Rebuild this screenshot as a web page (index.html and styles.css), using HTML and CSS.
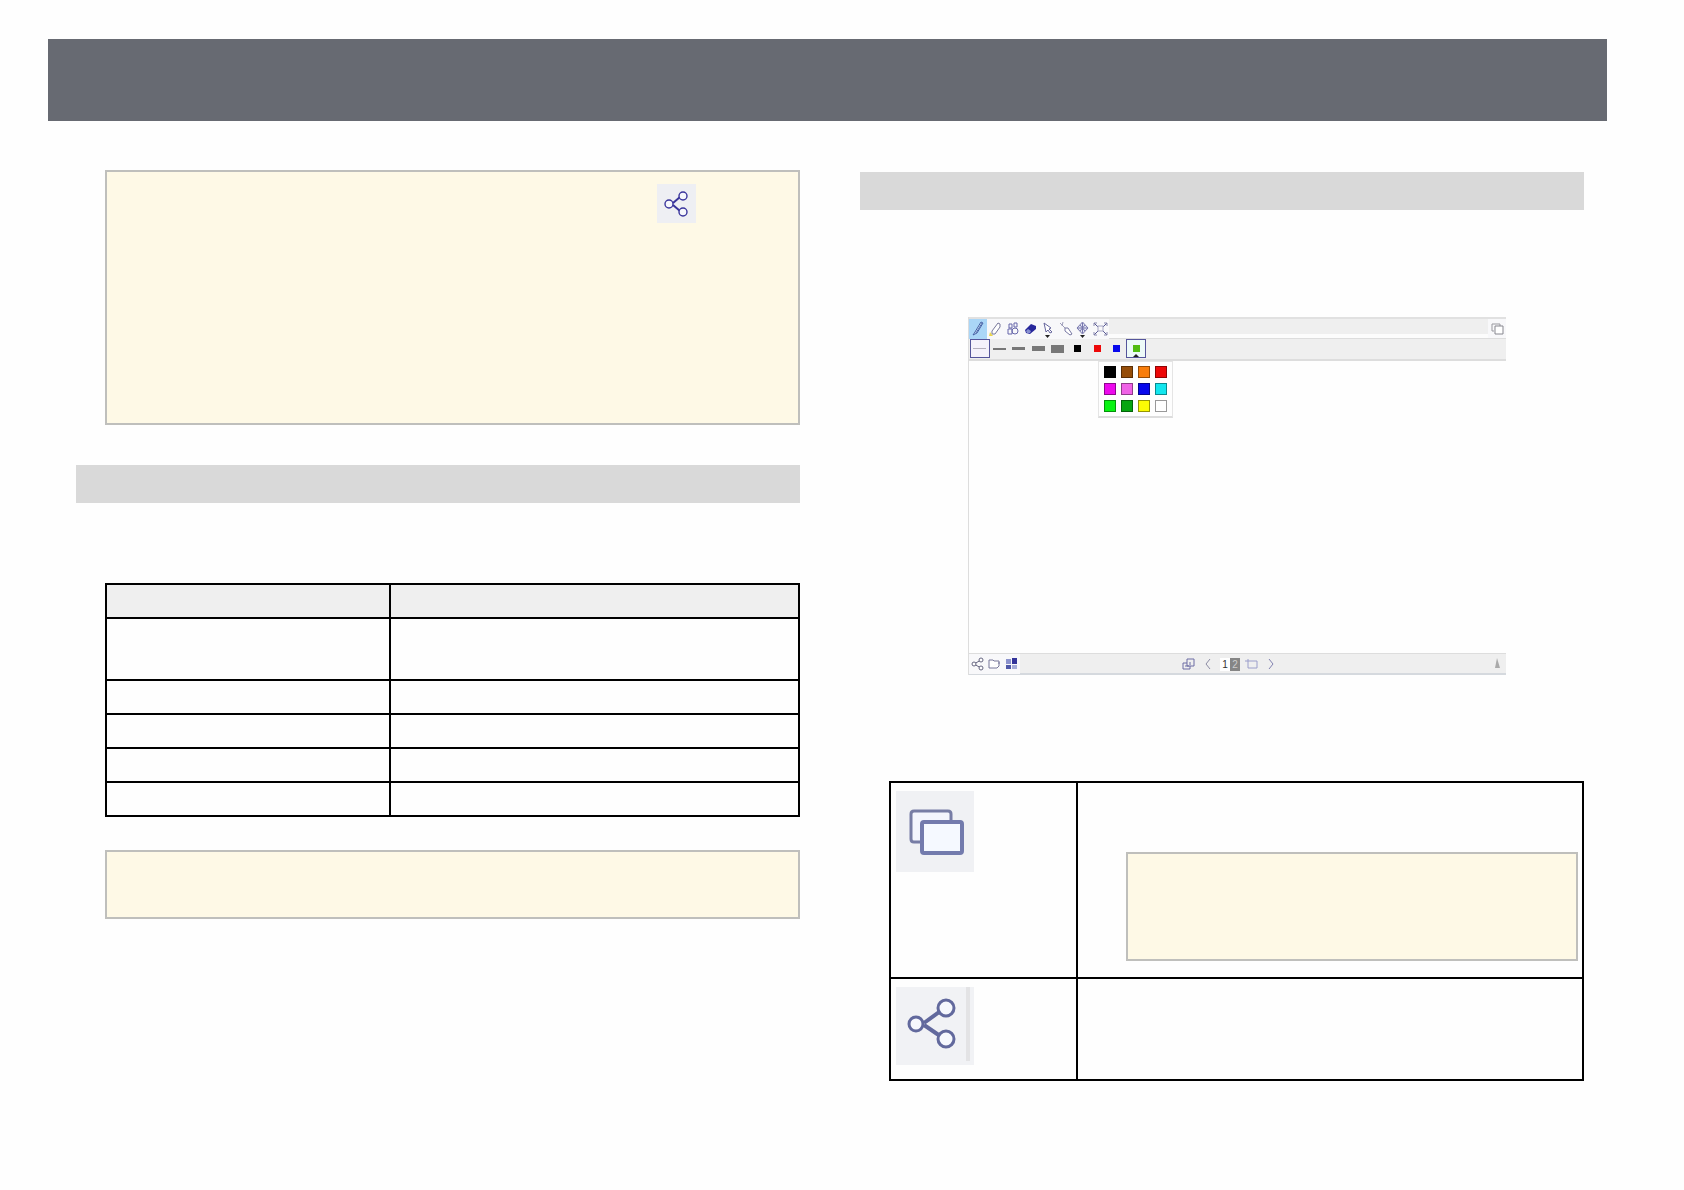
FILE: index.html
```html
<!DOCTYPE html>
<html lang="en">
<head>
    <meta charset="UTF-8">
    <meta name="viewport" content="width=device-width, initial-scale=1.0">
    <title>Whiteboard guide</title>
    <link rel="stylesheet" href="styles.css">
</head>
<body>
    <svg class="symbols" aria-hidden="true">
        <symbol id="share" viewBox="0 0 78 78">
            <path d="M28 36 L50 20 M28 38 L50 53" fill="none" stroke="currentColor" stroke-width="4"/>
            <g fill="#f6f8fd" stroke="currentColor" stroke-width="3">
                <circle cx="20" cy="37" r="7"/>
                <circle cx="50" cy="21" r="8"/>
                <circle cx="50" cy="52" r="8"/>
            </g>
        </symbol>
    </svg>

    <header class="banner"></header>

    <main class="columns">
        <section class="column">
            <div class="note note-tall">
                <svg class="note-icon" role="img" aria-label="Share" viewBox="0 0 39 39">
                    <rect width="39" height="39" fill="#eeeff3"/>
                    <path d="M16 19 L23 13 M16 21 L23 27" fill="none" stroke="#3a359c" stroke-width="2"/>
                    <g fill="#f6f7fc" stroke="#3a359c" stroke-width="1.4">
                        <circle cx="12" cy="20" r="4"/>
                        <circle cx="26" cy="12" r="4"/>
                        <circle cx="26" cy="28" r="4"/>
                    </g>
                </svg>
            </div>

            <div class="heading heading-spaced"></div>

            <table class="grid-table">
                <thead>
                    <tr><th></th><th></th></tr>
                </thead>
                <tbody>
                    <tr class="row-tall"><td></td><td></td></tr>
                    <tr><td></td><td></td></tr>
                    <tr><td></td><td></td></tr>
                    <tr><td></td><td></td></tr>
                    <tr><td></td><td></td></tr>
                </tbody>
            </table>

            <div class="note note-short"></div>
        </section>

        <section class="column">
            <div class="heading"></div>

            <div class="board">
                <div class="toolbar">
                    <div class="tools">
                        <button class="tool active" aria-label="Pen">
                            <svg viewBox="0 0 17 20"><path d="M12 3 L6 13 L4 16 L8 14 L14 4 Z" fill="#d9efff" stroke="#4661a5"/><path d="M13 4 L7 14" stroke="#526eae"/></svg>
                        </button>
                        <button class="tool" aria-label="Highlighter">
                            <svg viewBox="0 0 17 20"><path d="M11 4 L13 5 L13 8 L8 15 L5 15 L5 12 Z" fill="#fff" stroke="#77779a"/><path d="M3 13 L6 17 L2 17 Z" fill="#e9d64e"/></svg>
                        </button>
                        <button class="tool" aria-label="Shapes">
                            <svg viewBox="0 0 17 20"><path d="M5 5 H8 V9 H5 Z M10 4 H13 V8 H10 Z M4 10 H8 V15 H4 Z" fill="none" stroke="#6767aa"/><circle cx="11" cy="12" r="3" fill="none" stroke="#6767aa"/></svg>
                        </button>
                        <button class="tool" aria-label="Eraser">
                            <svg viewBox="0 0 17 20"><path d="M3 11 L9 5 L14 7 L14 10 L8 15 L4 14 Z" fill="#27279b"/><path d="M4 12 L6 10 L9 12 L8 14 L5 14 Z" fill="#8790d0"/></svg>
                        </button>
                        <button class="tool" aria-label="Select">
                            <svg viewBox="0 0 17 20"><path d="M5 4 L12 9 L10 10 L13 13 L11 14 L9 11 L7 13 Z" fill="#fff" stroke="#65659d"/><path d="M6 16 H11 L8.500 19 Z" fill="#222"/></svg>
                        </button>
                        <button class="tool" aria-label="Laser pointer">
                            <svg viewBox="0 0 17 20"><path d="M3 4 L9 10 M6 3 L5 7" stroke="#9b9bb8"/><path d="M8 9 L11 9 L15 15 L13 16 L8 12 Z" fill="#fff" stroke="#7777a3"/></svg>
                        </button>
                        <button class="tool" aria-label="Pan">
                            <svg viewBox="0 0 17 20"><path d="M8.500 3 L14 9 L8.500 15 L3 9 Z" fill="#e2e3f3" stroke="#7777ad"/><path d="M8.500 4 V14 M4 9 H13 M6 6 L11 12 M11 6 L6 12" stroke="#7777ad"/><path d="M6 16 H11 L8.500 19 Z" fill="#222"/></svg>
                        </button>
                        <button class="tool" aria-label="Zoom to fit">
                            <svg viewBox="0 0 17 20"><path d="M2 4 L6 8 M15 4 L11 8 M2 16 L6 12 M15 16 L11 12" stroke="#555592"/><path d="M2 7 V4 H5 M12 4 H15 V7 M2 13 V16 H5 M12 16 H15 V13" fill="none" stroke="#8888ae"/><rect x="6" y="7" width="5" height="5" fill="none" stroke="#a5a5c3"/></svg>
                        </button>
                    </div>
                    <button class="tool windows" aria-label="Switch window">
                        <svg viewBox="0 0 17 20"><path d="M5 12 H3 V5 H11 V7" fill="none" stroke="#99999f"/><path d="M6 7 H14 V15 H6 Z" fill="#fff" stroke="#87878f"/></svg>
                    </button>
                </div>

                <div class="options">
                    <button class="option selected" aria-label="Line 1"><span class="line line-1"></span></button>
                    <button class="option" aria-label="Line 2"><span class="line line-2"></span></button>
                    <button class="option" aria-label="Line 3"><span class="line line-3"></span></button>
                    <button class="option" aria-label="Line 4"><span class="line line-4"></span></button>
                    <button class="option" aria-label="Line 5"><span class="line line-5"></span></button>
                    <button class="option" aria-label="Black"><span class="dot black"></span></button>
                    <button class="option" aria-label="Red"><span class="dot red"></span></button>
                    <button class="option" aria-label="Blue"><span class="dot blue"></span></button>
                    <button class="option selected custom" aria-label="More colors"><span class="dot leaf"></span></button>

                    <div class="palette">
                        <button class="swatch black" aria-label="Black"></button>
                        <button class="swatch brown" aria-label="Brown"></button>
                        <button class="swatch orange" aria-label="Orange"></button>
                        <button class="swatch red" aria-label="Red"></button>
                        <button class="swatch magenta" aria-label="Magenta"></button>
                        <button class="swatch pink" aria-label="Pink"></button>
                        <button class="swatch blue" aria-label="Blue"></button>
                        <button class="swatch cyan" aria-label="Cyan"></button>
                        <button class="swatch lime" aria-label="Lime"></button>
                        <button class="swatch green" aria-label="Green"></button>
                        <button class="swatch yellow" aria-label="Yellow"></button>
                        <button class="swatch white" aria-label="White"></button>
                    </div>
                </div>

                <div class="canvas"></div>

                <div class="statusbar">
                    <div class="files">
                        <button class="tool" aria-label="Share">
                            <svg viewBox="0 0 17 20"><path d="M5 10 L12 6 M5 10 L12 14" stroke="#666681"/><g fill="#fff" stroke="#666681"><circle cx="5" cy="10" r="2"/><circle cx="12" cy="6" r="2"/><circle cx="12" cy="14" r="2"/></g></svg>
                        </button>
                        <button class="tool" aria-label="Open">
                            <svg viewBox="0 0 17 20"><path d="M3 14 V6 H7 L8 7 H13 V10 M3 14 H11 L13 12 V8" fill="#fff" stroke="#77779a"/></svg>
                        </button>
                        <button class="tool" aria-label="Templates">
                            <svg viewBox="0 0 17 20"><rect x="3" y="5" width="5" height="5" fill="#8c93cd"/><rect x="9" y="4" width="5" height="6" fill="#34349a"/><rect x="3" y="11" width="5" height="4" fill="#5059a8"/><rect x="9" y="11" width="5" height="4" fill="#a5abd8"/></svg>
                        </button>
                    </div>
                    <div class="pages">
                        <button class="tool" aria-label="Duplicate page">
                            <svg viewBox="0 0 17 20"><path d="M7 9 H3 V15 H10 V12" fill="none" stroke="#6d6da4"/><path d="M7 5 H14 V12 H7 Z M5 12 H9 M10 8 V11" fill="none" stroke="#6d6da4"/></svg>
                        </button>
                        <button class="tool" aria-label="Previous page">
                            <svg viewBox="0 0 17 20"><path d="M10 5 L6 10 L10 15" fill="none" stroke="#8c8ca4"/></svg>
                        </button>
                        <div class="page-numbers">
                            <button class="page">1</button>
                            <button class="page current">2</button>
                        </div>
                        <button class="tool" aria-label="Add page">
                            <svg viewBox="0 0 17 20"><path d="M5 5 V11 M2 7 H9 M9 7 H14 V14 H5 V11" fill="none" stroke="#9b9ecb"/></svg>
                        </button>
                        <button class="tool" aria-label="Next page">
                            <svg viewBox="0 0 17 20"><path d="M6 5 L10 10 L6 15" fill="none" stroke="#8080b0"/></svg>
                        </button>
                    </div>
                    <button class="tool status-end" aria-label="Toolbar position">
                        <svg viewBox="0 0 17 20"><path d="M8 4 L11 14 H6 Z" fill="#aaa"/></svg>
                    </button>
                </div>
            </div>

            <table class="grid-table icon-table">
                <tbody>
                    <tr class="windows-row">
                        <td>
                            <svg class="thumb" role="img" aria-label="Switch window" viewBox="0 0 78 81">
                                <rect width="78" height="81" fill="#f0f1f4"/>
                                <path d="M24 51 H18 Q15 51 15 48 V23 Q15 20 18 20 H52 Q55 20 55 23 V30" fill="#f3f5fd" stroke="#777da5" stroke-width="3"/>
                                <rect x="26" y="31" width="40" height="31" rx="2" fill="#f5f9ff" stroke="#737bad" stroke-width="4"/>
                            </svg>
                        </td>
                        <td><div class="note note-inner"></div></td>
                    </tr>
                    <tr class="share-row">
                        <td>
                            <svg class="thumb share-thumb" role="img" aria-label="Share" viewBox="0 0 78 78">
                                <rect width="78" height="78" fill="#f1f2f5"/>
                                <rect x="70" width="4" height="74" fill="#e3e3e5"/>
                                <use href="#share" width="78" height="78"/>
                            </svg>
                        </td>
                        <td></td>
                    </tr>
                </tbody>
            </table>
        </section>
    </main>
</body>
</html>
```
FILE: styles.css
```css
* {
    margin: 0;
    padding: 0;
    box-sizing: border-box;
}

body {
    font-family: "Liberation Sans", Arial, sans-serif;
    background: #fefefe;
    color: #222;
}

button {
    border: 0;
    background: none;
    font-family: inherit;
    cursor: pointer;
}

.symbols {
    display: none;
}

.banner {
    height: 82px;
    margin: 39px 77px 0 48px;
    background: #676a72;
}

.columns {
    display: grid;
    grid-template-columns: 1fr 1fr;
    gap: 60px;
    padding: 49px 100px 40px 76px;
}

.column {
    min-width: 0;
}

.column + .column {
    padding-top: 2px;
}

.heading {
    height: 38px;
    background: #d9d9d9;
}

.heading-spaced {
    margin: 40px 0 80px;
}

/* Notes */
.note {
    margin-left: 29px;
    border: 2px solid #bfbfbc;
    background: #fef9e6;
}

.note-tall {
    display: flex;
    justify-content: flex-end;
    min-height: 255px;
    padding: 12px 102px 0 0;
}

.note-short {
    min-height: 69px;
    margin-top: 33px;
}

.note-inner {
    min-height: 109px;
    margin: 69px 4px 0 48px;
}

.note-icon {
    width: 39px;
    height: 39px;
}

/* Tables */
.grid-table {
    width: calc(100% - 29px);
    margin-left: 29px;
    border-collapse: collapse;
    table-layout: fixed;
}

.grid-table th,
.grid-table td {
    height: 34px;
    border: 2px solid #000;
    vertical-align: top;
}

.grid-table th {
    background: #efefef;
}

.grid-table th:first-child {
    width: 41%;
}

.grid-table .row-tall td {
    height: 62px;
}

.icon-table td:first-child {
    width: 27%;
}

.icon-table .windows-row td {
    height: 196px;
}

.icon-table .share-row td {
    height: 102px;
}

.thumb {
    display: block;
    width: 78px;
    height: 81px;
    margin: 8px 0 0 5px;
}

.share-thumb {
    height: 78px;
    color: #62699d;
}

/* Whiteboard window */
.board {
    margin: 107px 78px 106px 108px;
    border-left: 1px solid #ddd;
}

.toolbar {
    display: flex;
    justify-content: space-between;
    height: 22px;
    border-top: 2px solid #e1e1e1;
    border-bottom: 1px solid #ddd;
    background: linear-gradient(#efefef 80%, #fcfcfc 80%);
}

.tools {
    display: grid;
    grid-template-columns: repeat(8, 1fr);
    width: 140px;
}

.tool {
    display: flex;
    justify-content: center;
    align-items: center;
    background: #f8f8fa;
}

.tool svg {
    width: 17px;
    height: 20px;
}

.tool.active {
    background: #aad6f7;
}

.windows {
    width: 18px;
}

.options {
    position: relative;
    display: grid;
    grid-template-columns: repeat(9, 1fr);
    height: 22px;
    padding: 0 360px 1px 1px;
    border-bottom: 2px solid #ddd;
    background: #efefef;
}

.option {
    display: flex;
    justify-content: center;
    align-items: center;
}

.option.selected {
    border: 1px solid #55559b;
    background: #f5f2fb;
}

.option.custom {
    position: relative;
    background: #edfaf8;
}

.custom::after {
    content: "";
    position: absolute;
    bottom: 0;
    border: 3px solid transparent;
    border-top: 0;
    border-bottom-color: #222;
}

.line {
    width: 13px;
    background: #777;
}

.line-1 {
    height: 1px;
    background: #b5b0bd;
}

.line-2 {
    height: 2px;
}

.line-3 {
    height: 3px;
}

.line-4 {
    height: 5px;
}

.line-5 {
    height: 8px;
}

.dot {
    width: 7px;
    height: 7px;
}

.palette {
    position: absolute;
    top: 22px;
    left: 129px;
    display: grid;
    grid-template-columns: repeat(4, 1fr);
    place-items: center;
    width: 75px;
    height: 57px;
    padding: 1px 2px 2px;
    border: 1px solid #e5e5e5;
    border-bottom: 2px solid #ddd;
    background: #fefefe;
}

.swatch {
    width: 12px;
    height: 12px;
    border: 1px solid rgba(0, 0, 0, 0.4);
}

.black { background: #000; }
.brown { background: #954d08; }
.orange { background: #f87d0b; }
.red { background: #ed0808; }
.magenta { background: #ed09ed; }
.pink { background: #ef62e6; }
.blue { background: #0808ec; }
.cyan { background: #12e6ee; }
.lime { background: #08f312; }
.green { background: #07a511; }
.yellow { background: #fbfb05; }
.white { background: #fff; }
.leaf { background: #51bd13; }

.canvas {
    min-height: 292px;
}

.statusbar {
    display: grid;
    grid-template-columns: 211fr 100fr 226fr;
    height: 22px;
    border-top: 1px solid #ddd;
    border-bottom: 2px solid #d5d9de;
    background: #efefef;
}

.files,
.pages {
    display: flex;
}

.pages {
    justify-content: space-between;
}

.pages .tool,
.status-end {
    background: none;
}

.page-numbers {
    display: flex;
    align-items: center;
}

.page {
    width: 10px;
    height: 13px;
    background: #fff;
    color: #333;
    font-size: 10px;
    line-height: 13px;
}

.page.current {
    background: #858585;
    color: #ccc;
}

.status-end {
    justify-self: end;
}
```
